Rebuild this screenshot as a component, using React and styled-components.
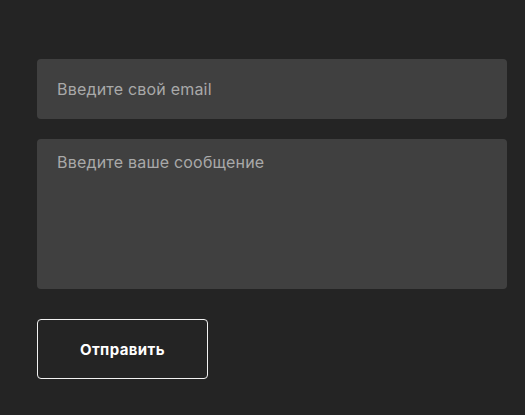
import React from "react";
import styled, { createGlobalStyle } from "styled-components";

const GlobalStyle = createGlobalStyle`
  html, body {
    margin: 0;
    padding: 0;
    background: #242424;
  }
  body {
    font-family: Inter, "Noto Sans", sans-serif;
  }
`

const Page = styled.div`
  min-height: 415px;
  padding: 59px 18px 0 37px;
  box-sizing: border-box;
`
const Form = styled.form`
  display: flex;
  flex-direction: column;
  width: 470px;
`
const Field = styled.input`
  box-sizing: border-box;
  width: 100%;
  height: 60px;
  padding: 0 20px;
  border: none;
  border-radius: 4px;
  background: #404040;
  color: #ddd;
  font-family: Inter, "Noto Sans", sans-serif;
  font-size: 16px;
  letter-spacing: 0.2px;
  outline: none;
  margin-bottom: 20px;
  &::placeholder {
    color: #a9a9a9;
  }
`
const Message = styled.textarea`
  box-sizing: border-box;
  width: 100%;
  height: 150px;
  padding: 13px 20px;
  border: none;
  border-radius: 4px;
  background: #404040;
  color: #ddd;
  font-family: Inter, "Noto Sans", sans-serif;
  font-size: 16px;
  letter-spacing: 0.2px;
  line-height: 20px;
  resize: none;
  outline: none;
  margin-bottom: 30px;
  &::placeholder {
    color: #a9a9a9;
  }
`
const SendBtn = styled.button`
  width: 171px;
  height: 60px;
  border: 1px solid #f2f2f2;
  border-radius: 4px;
  background: transparent;
  color: #fff;
  font-family: Inter, "Noto Sans", sans-serif;
  font-size: 15px;
  font-weight: 700;
  letter-spacing: 0.4px;
  cursor: pointer;
`

const App = () => {
    return (
        <Page>
            <GlobalStyle />
            <Form onSubmit={(e) => e.preventDefault()}>
                <Field type="email" placeholder="Введите свой email" />
                <Message placeholder="Введите ваше сообщение" />
                <SendBtn type="submit">Отправить</SendBtn>
            </Form>
        </Page>
    )
}

export default App
